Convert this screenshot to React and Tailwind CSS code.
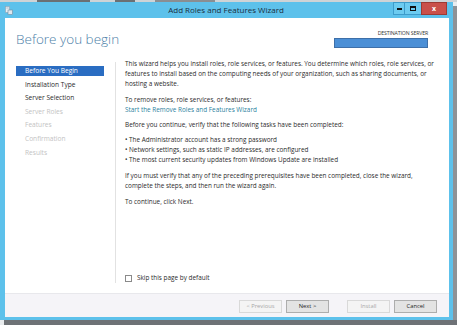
import React from "react";

const navItems = [
  { label: "Before You Begin", state: "active" },
  { label: "Installation Type", state: "normal" },
  { label: "Server Selection", state: "normal" },
  { label: "Server Roles", state: "disabled" },
  { label: "Features", state: "disabled" },
  { label: "Confirmation", state: "disabled" },
  { label: "Results", state: "disabled" },
];

const WizardButton = ({ children, disabled }) => (
  <button
    className={
      disabled
        ? "w-[43px] h-[13px] border border-[#d9d9d9] bg-[#f4f4f4] text-[5.8px] text-[#a8a8a8]"
        : "w-[43px] h-[13px] border border-[#adadad] bg-[#e3e3e3] text-[5.8px] text-[#222]"
    }
  >
    {children}
  </button>
);

const App = () => {
  return (
    <div
      className="w-[457px] h-[325px] bg-[#e9ecee] overflow-hidden flex flex-col"
      style={{ fontFamily: '"Open Sans", "Noto Sans", sans-serif' }}
    >
      <div className="h-[2px] flex bg-[#cfd3d6]">
        <div className="w-[37px]" />
        <div className="w-[53px] bg-[#6b6f73]" />
        <div className="w-[25px]" />
        <div className="w-[20px] bg-[#6b6f73]" />
        <div className="w-[20px]" />
        <div className="w-[60px] bg-[#8a8e92]" />
      </div>

      <div className="flex">
        <div className="w-[453px] h-[318px] bg-[#5dc1eb] flex flex-col">
          {/* title bar */}
          <div className="h-[16px] flex items-center px-[5px]">
            <svg width="8" height="9" viewBox="0 0 8 9">
              <rect x="0.5" y="0.5" width="4" height="6" fill="#e8eef3" stroke="#8aa3b5" strokeWidth="0.6" />
              <rect x="3" y="4" width="4.5" height="4.5" fill="#dfe7ee" stroke="#6f8aa0" strokeWidth="0.6" />
              <line x1="1.3" y1="2" x2="3.7" y2="2" stroke="#6f8aa0" strokeWidth="0.5" />
            </svg>
            <div className="flex-1 text-center text-[8px] text-[#1c2f3d] pl-[46px]">
              Add Roles and Features Wizard
            </div>
            <div className="flex self-start h-[13px]">
              <div className="w-[12px] h-full border border-[#3d9ccb] bg-[#6ccbf0] flex items-end justify-center pb-[4px]">
                <div className="w-[5px] h-[2px] bg-[#111]" />
              </div>
              <div className="w-[16px] h-full border-y border-[#3d9ccb] bg-[#6ccbf0] flex items-center justify-center">
                <div className="w-[6px] h-[5px] border border-[#111] border-t-2" />
              </div>
              <div className="w-[26px] h-full border border-[#9c3a34] bg-[#c9504a] flex items-center justify-center text-[7px] font-bold text-white leading-none">
                x
              </div>
            </div>
            <div className="w-[1px]" />
          </div>

          {/* content */}
          <div className="flex-1 mx-[5px] mr-[4px] bg-white flex flex-col">
            <div className="h-[41px] flex items-start px-[11px] pt-[15px]">
              <div className="flex-1 text-[13.5px] font-light text-[#4c80a8] leading-none">
                Before you begin
              </div>
              <div className="flex flex-col items-end mr-[10px] -mt-[2px]">
                <div className="text-[5.2px] text-[#333] leading-none tracking-tight">
                  DESTINATION SERVER
                </div>
                <div className="mt-[2px] w-[94px] h-[10px] bg-[#4b8fd6] border border-[#3e6fa8]" />
              </div>
            </div>

            <div className="flex-1 flex">
              <div className="w-[99px] pl-[11px] pt-[7px] flex flex-col">
                {navItems.map((item) => (
                  <div
                    key={item.label}
                    className={
                      item.state === "active"
                        ? "h-[10px] mb-[3.6px] pl-[9px] flex items-center text-[6.6px] bg-[#2a6dc2] text-white"
                        : item.state === "normal"
                        ? "h-[10px] mb-[3.6px] pl-[9px] flex items-center text-[6.6px] text-[#2b2b2b]"
                        : "h-[10px] mb-[3.6px] pl-[9px] flex items-center text-[6.6px] text-[#c3c3c3]"
                    }
                  >
                    {item.label}
                  </div>
                ))}
              </div>
              <div className="w-[11px]" />
              <div className="w-[1px] bg-[#e2e2e2] mt-[3px] mb-[10px]" />
              <div className="flex-1 pl-[9px] pr-[4px] flex flex-col text-[6.4px] leading-[10px] text-[#2b2b2b] whitespace-nowrap">
                <p className="mb-[6px]">
                  This wizard helps you install roles, role services, or features. You determine which roles, role services, or
                  <br />
                  features to install based on the computing needs of your organization, such as sharing documents, or
                  <br />
                  hosting a website.
                </p>
                <p className="mb-[5px]">
                  To remove roles, role services, or features:
                  <br />
                  <span className="text-[#2a7f9e]">Start the Remove Roles and Features Wizard</span>
                </p>
                <p className="mb-[5px]">Before you continue, verify that the following tasks have been completed:</p>
                <ul className="mb-[6px]">
                  <li>• The Administrator account has a strong password</li>
                  <li>• Network settings, such as static IP addresses, are configured</li>
                  <li>• The most current security updates from Windows Update are installed</li>
                </ul>
                <p className="mb-[6px]">
                  If you must verify that any of the preceding prerequisites have been completed, close the wizard,
                  <br />
                  complete the steps, and then run the wizard again.
                </p>
                <p>To continue, click Next.</p>
                <div className="mt-auto mb-[10px] flex items-center gap-[5px]">
                  <div className="w-[7px] h-[7px] border border-[#8a8a8a] bg-white" />
                  <span>Skip this page by default</span>
                </div>
              </div>
            </div>

            <div className="h-[24px] border-t border-[#e8e8ec] bg-[#f5f4f8] flex items-center justify-end pr-[12px] pt-[1px]">
              <div className="flex gap-[4px]">
                <WizardButton disabled>&lt; Previous</WizardButton>
                <WizardButton>Next &gt;</WizardButton>
              </div>
              <div className="flex gap-[4px] ml-[18px]">
                <WizardButton disabled>Install</WizardButton>
                <WizardButton>Cancel</WizardButton>
              </div>
            </div>
          </div>
          <div className="h-[3px]" />
        </div>
        <div className="w-[4px] flex flex-col">
          <div className="h-[4px]" />
          <div className="flex-1 bg-[#8e9296]" />
        </div>
      </div>
      <div className="h-[5px] flex">
        <div className="w-[4px]" />
        <div className="w-[453px] bg-[#6e7276]" />
      </div>
    </div>
  );
};

export default App;
